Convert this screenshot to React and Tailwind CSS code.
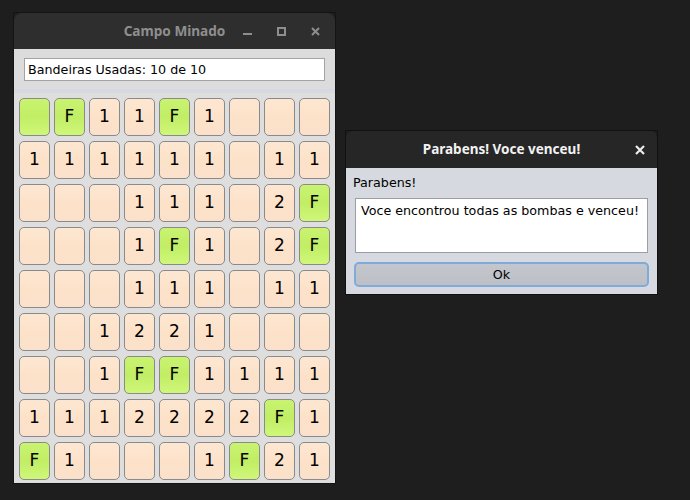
import React from "react";

const board = [
  ["G", "F", "1", "1", "F", "1", "", "", ""],
  ["1", "1", "1", "1", "1", "1", "", "1", "1"],
  ["", "", "", "1", "1", "1", "", "2", "F"],
  ["", "", "", "1", "F", "1", "", "2", "F"],
  ["", "", "", "1", "1", "1", "", "1", "1"],
  ["", "", "1", "2", "2", "1", "", "", ""],
  ["", "", "1", "F", "F", "1", "1", "1", "1"],
  ["1", "1", "1", "2", "2", "2", "2", "F", "1"],
  ["F", "1", "", "", "", "1", "F", "2", "1"],
];

function Cell({ v }) {
  const green = v === "F" || v === "G";
  const label = v === "G" ? "" : v;
  return (
    <div
      className={
        "w-[31px] h-[38px] rounded-[5px] border border-[#8a8a8a] flex items-center justify-center text-[17px] text-black font-['DejaVu_Sans',sans-serif] " +
        (green
          ? "bg-gradient-to-b from-[#c9f370] via-[#c1ee65] to-[#cff779]"
          : "bg-gradient-to-b from-[#fde7d2] via-[#fde2c9] to-[#fbe1cb]")
      }
    >
      {label}
    </div>
  );
}

export default function App() {
  return (
    <div className="w-[690px] h-[500px] bg-[#1e1e1e] relative overflow-hidden font-['DejaVu_Sans',sans-serif]">
      {/* Main window */}
      <div className="absolute left-[14px] top-[13px] w-[321px] flex flex-col shadow-[0_0_0_1px_#141414]">
        <div className="h-[36px] bg-[#2e2e2e] rounded-t-[8px] relative flex items-center justify-center">
          <span className="font-['Noto_Sans',sans-serif] font-bold text-[13.6px] text-[#8e8e8e]">Campo Minado</span>
          <div className="absolute right-0 top-0 h-full flex items-center">
            <svg width="112" height="36" viewBox="0 0 112 36">
              <rect x="20" y="20" width="9" height="2" fill="#8e8e8e" />
              <rect x="55" y="15" width="7" height="7" fill="none" stroke="#8e8e8e" strokeWidth="2" />
              <path d="M89 15 L96 22 M96 15 L89 22" stroke="#8e8e8e" strokeWidth="2" />
            </svg>
          </div>
        </div>
        <div className="bg-[#dcdcdc] px-[10px] pt-[9px] pb-[8px]">
          <div className="h-[23px] bg-white border border-[#a3a3a3] flex items-center pl-[3px] text-[12.7px] text-black whitespace-nowrap">
            Bandeiras Usadas: 10 de 10
          </div>
        </div>
        <div className="bg-[#dedede] border-t-[4px] border-[#d6d9df] pt-[5px] pl-[5px] pb-[3px]">
          <div className="grid grid-cols-[repeat(9,31px)] gap-x-[4px] gap-y-[5px]">
            {board.flatMap((row, r) =>
              row.map((v, c) => <Cell key={r + "-" + c} v={v} />)
            )}
          </div>
        </div>
      </div>

      {/* Dialog */}
      <div className="absolute left-[346px] top-[131px] w-[311px] flex flex-col shadow-[0_0_0_1px_#111111]">
        <div className="h-[37px] bg-[#262626] rounded-t-[7px] relative flex items-center justify-center">
          <span className="font-['Noto_Sans',sans-serif] font-bold text-[13.5px] text-[#f2f2f2]">Parabens! Voce venceu!</span>
          <svg className="absolute right-[12px] top-[14px]" width="10" height="10" viewBox="0 0 10 10">
            <path d="M1 1 L9 9 M9 1 L1 9" stroke="#ececec" strokeWidth="2.2" />
          </svg>
        </div>
        <div className="bg-[#d6d9df] px-[8px] pt-[7px] pb-[7px] flex flex-col">
          <div className="h-[16px] flex items-center text-[12.7px] text-black -ml-[1px] whitespace-nowrap">Parabens!</div>
          <div className="mt-[7px] ml-[1px] mr-[1px] h-[55px] bg-white border border-[#9b9ea5] px-[5px] pt-[4px] text-[12.7px] text-black leading-[16px] whitespace-nowrap overflow-hidden">
            Voce encontrou todas as bombas e venceu!
          </div>
          <div className="mt-[9px] h-[25px] rounded-[5px] border-2 border-[#80aad8] bg-gradient-to-b from-[#c3c6cc] to-[#bcbfc6] flex items-center justify-center text-[12.7px] text-black">
            Ok
          </div>
        </div>
      </div>
    </div>
  );
}
